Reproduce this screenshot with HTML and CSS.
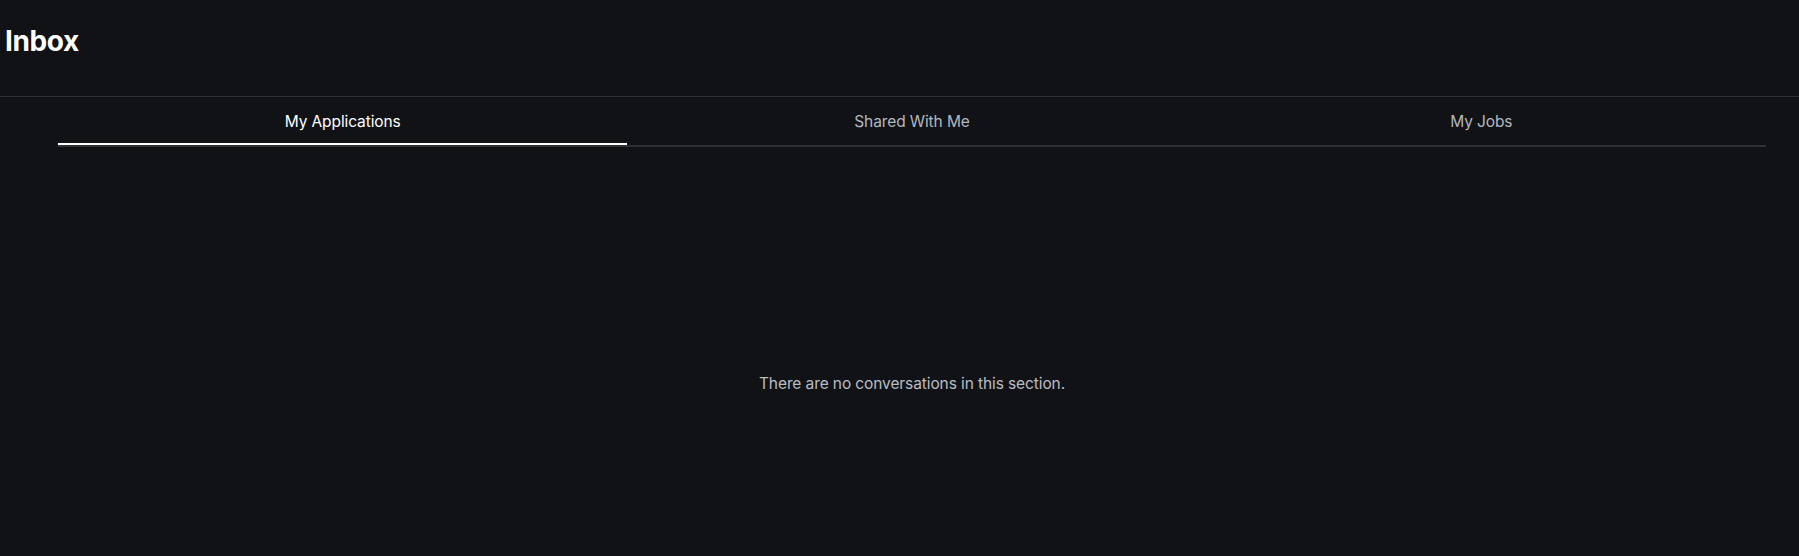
FILE: index.html
```html
<!DOCTYPE html>
<html lang="en">
<head>
<meta charset="utf-8">
<title>Inbox</title>
<link rel="stylesheet" href="styles.css">
</head>
<body>
<header class="page-header">
  <h1 class="page-title">Inbox</h1>
</header>
<main class="inbox">
  <nav class="tabs">
    <div class="tab tab-active">My Applications</div>
    <div class="tab">Shared With Me</div>
    <div class="tab">My Jobs</div>
  </nav>
  <div class="empty">There are no conversations in this section.</div>
</main>
</body>
</html>
```

FILE: styles.css
```css
html, body {
  margin: 0;
  padding: 0;
  background: #111216;
  height: 100%;
}
body {
  font-family: Inter, "Noto Sans", "Liberation Sans", sans-serif;
  color: #ffffff;
}
.page-header {
  height: 96px;
  border-bottom: 1px solid #313236;
  box-sizing: content-box;
  padding: 0 5px;
}
.page-title {
  margin: 0;
  padding-top: 24px;
  font-size: 28px;
  line-height: 34px;
  font-weight: 700;
  letter-spacing: -0.4px;
}
.inbox {
  padding: 0 33px 0 58px;
}
.tabs {
  display: grid;
  grid-template-columns: 1fr 1fr 1fr;
  border-bottom: 2px solid #2f3034;
}
.tab {
  height: 44px;
  padding-top: 2px;
  border-bottom: 2px solid transparent;
  display: flex;
  align-items: center;
  justify-content: center;
  font-size: 15.5px;
  letter-spacing: -0.1px;
  color: #b4b8bf;
}
.tab-active {
  color: #ffffff;
  border-bottom-color: #ffffff;
}
.empty {
  text-align: center;
  padding-top: 227px;
  font-size: 15.5px;
  letter-spacing: -0.1px;
  line-height: 20px;
  color: #b9bdc4;
}
```
